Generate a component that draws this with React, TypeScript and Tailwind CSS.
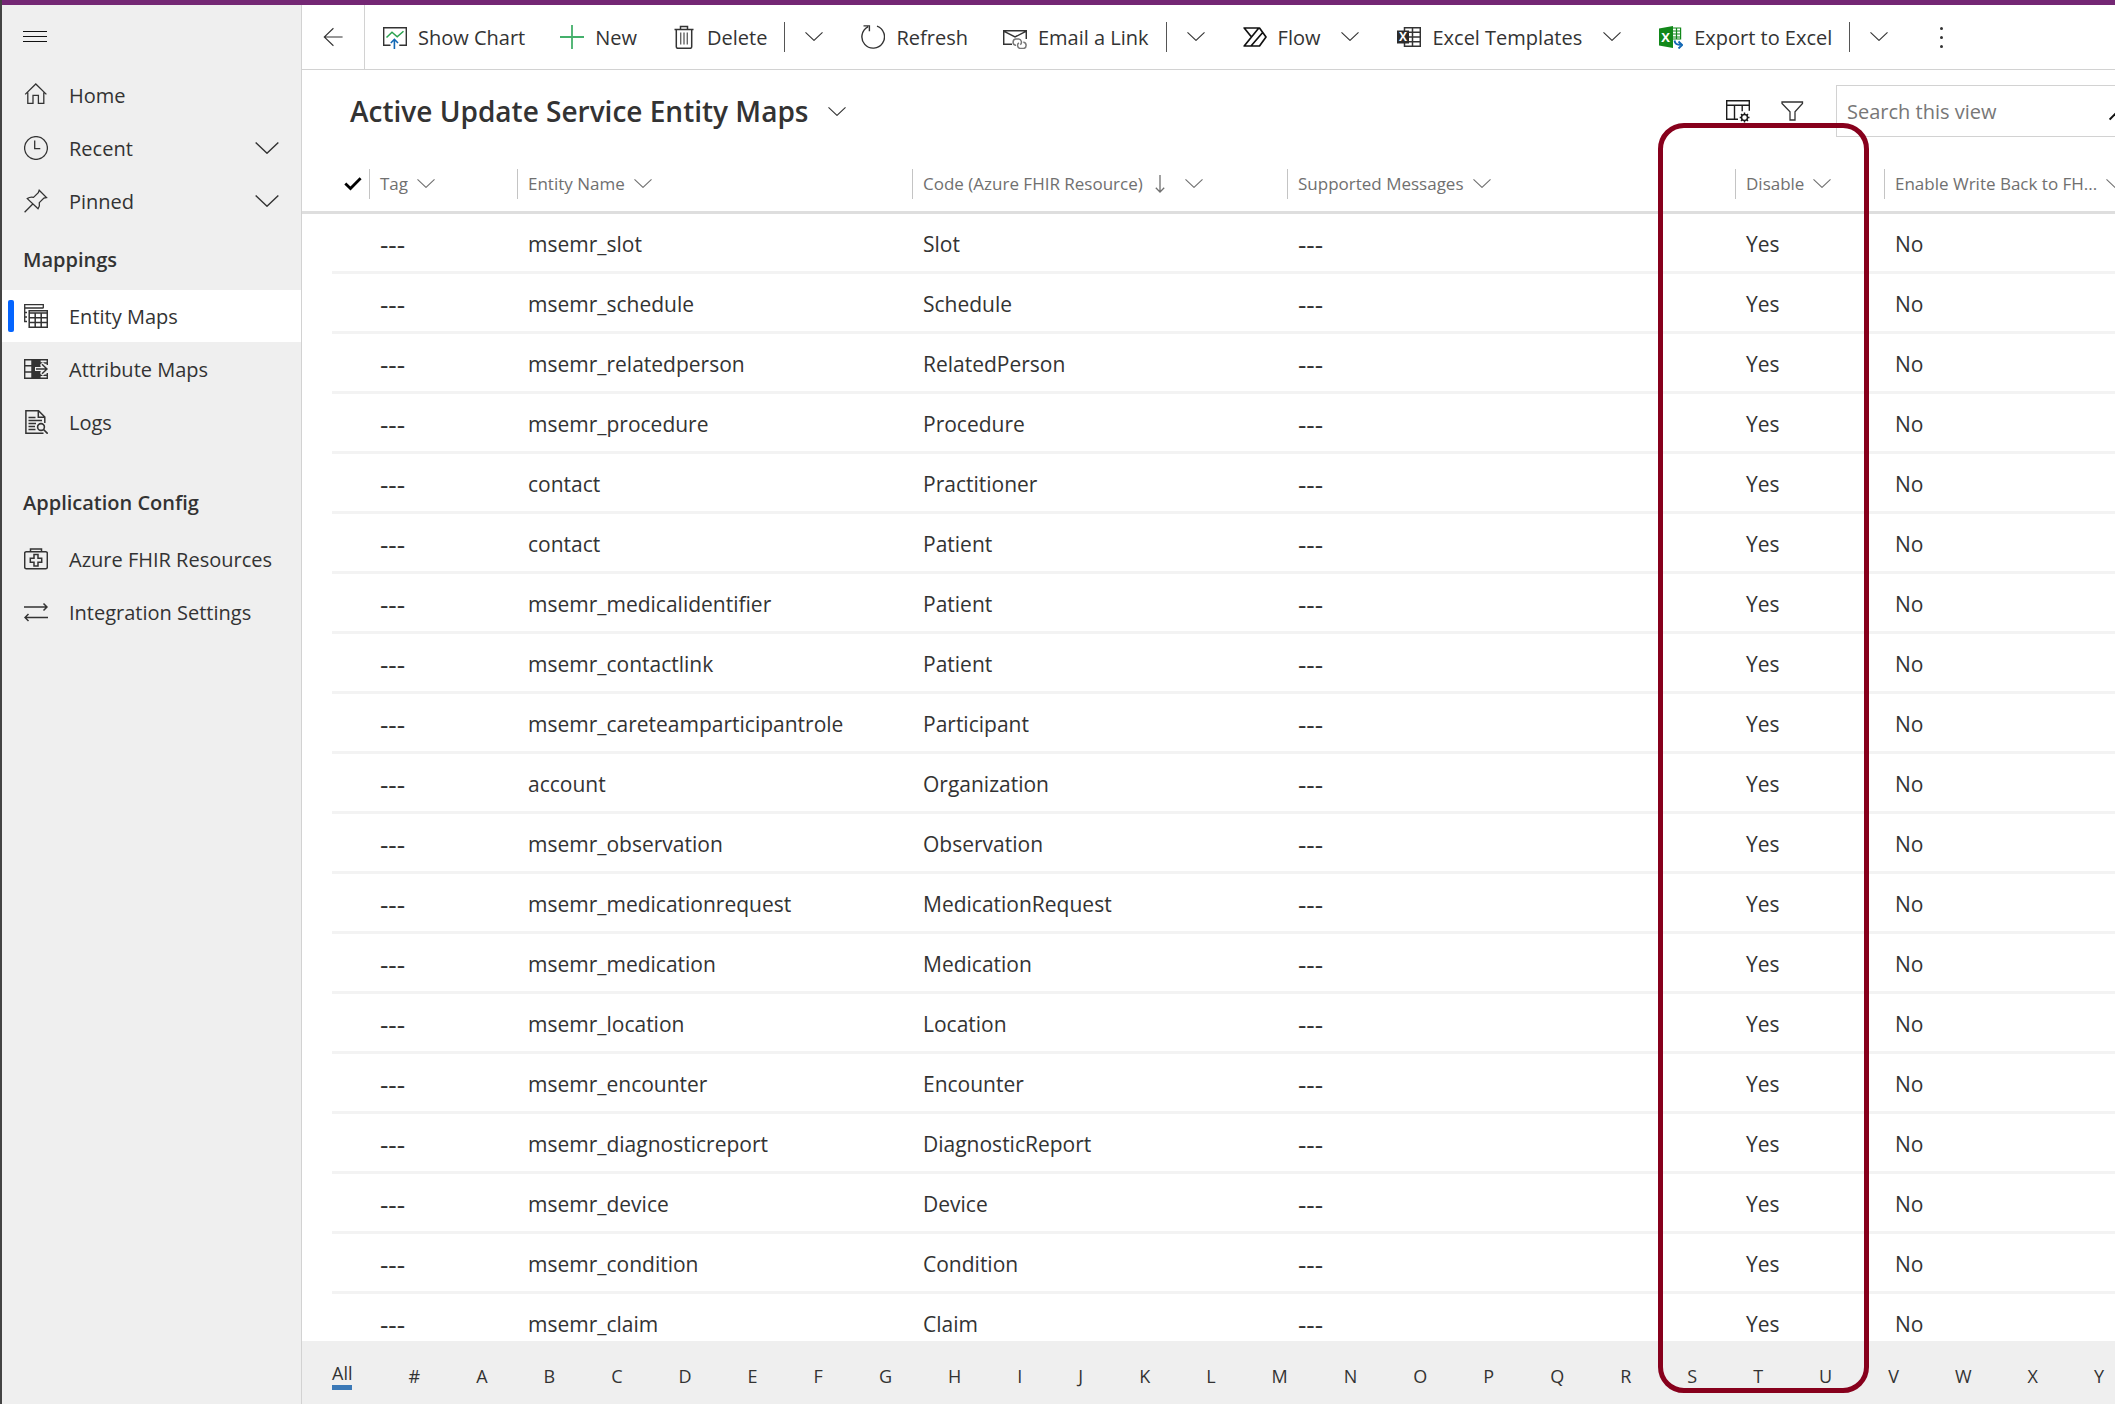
import type { ReactNode } from "react";

type IconProps = { className?: string };

function Svg({ children, className = "size-6" }: { children: ReactNode; className?: string }) {
  return (
    <svg
      viewBox="0 0 24 24"
      className={`${className} shrink-0`}
      fill="none"
      stroke="currentColor"
      strokeWidth={1.3}
      aria-hidden="true"
    >
      {children}
    </svg>
  );
}

function Chevron({ className = "h-[9px] w-[18px]" }: IconProps) {
  return (
    <svg viewBox="0 0 18 9" className={`${className} shrink-0`} fill="none" stroke="currentColor" strokeWidth={1.1} aria-hidden="true">
      <path d="M.5 .4 9 8.4 17.5 .4" />
    </svg>
  );
}

const MenuIcon = () => (
  <Svg>
    <path d="M0 6.5h24M0 11.5h24M0 16.5h24" stroke="#111" strokeWidth={1} />
  </Svg>
);
const HomeIcon = () => (
  <Svg>
    <path d="M1.2 11.4 11.8 1 22.4 11.4M3.8 9.4v10.9h5.2v-8h5.4v8h5.4V9.4" />
  </Svg>
);
const ClockIcon = () => (
  <Svg>
    <circle cx="12" cy="12" r="11.4" />
    <path d="M10.7 4.6v8h5.6" />
  </Svg>
);
const PinIcon = () => (
  <Svg>
    <path d="M.6 23.2 9 14.8M15.2 1.2l7.3 7.3-2.6.5-4.6 4.6c.5 2.4 0 4.4-1.2 6.1L3.3 9.6c1.7-1.2 3.8-1.7 6.2-1.2l4.8-4.7z" />
  </Svg>
);
const EntityIcon = () => (
  <Svg>
    <path d="M3 17.5H.7V.7h18.6v3.6M.7 4h18.6M.7 8.500H3M.7 13H3" />
    <path d="M5.200 6.700h18.100v16.600H5.200zM5.200 9h18.100M5.200 13.700h18.100M5.200 18.500h18.100M11.200 9v14.300M17.200 9v14.300" strokeWidth={1.5} />
  </Svg>
);
const AttributeIcon = () => (
  <Svg>
    <path d="M.7 2.700h22.600v18.600H.7zM.7 8.800h7.800M.7 15h7.800M8.200 2.700v18.600M16 6h7.300M16 18.200h7.300" strokeWidth={1.4} />
    <path d="M8.200 2.700H16v18.600H8.200z" fill="currentColor" />
    <path d="M22.600 8v8" stroke="#efefef" strokeWidth={3} />
    <path d="M11 12h12M17.500 6.500 23 12l-5.500 5.500" stroke="#efefef" strokeWidth={4} />
    <path d="M12 12h11.200M18 7.200 23 12l-5 4.800" strokeWidth={1.5} />
  </Svg>
);
const LogIcon = () => (
  <Svg>
    <path d="M20.800 13V7L14.500.7H1.900v22.600h17.600M14.300.7v6.500h6.500" strokeWidth={1.5} />
    <path d="M4.500 7.500h7M4.500 10.500h13.500M4.500 13.500H12M4.500 16.500h6.500M4.500 19.500h7" strokeWidth={1.4} />
    <circle cx="17" cy="17" r="3.400" strokeWidth={1.6} />
    <path d="m19.500 19.500 4.200 4.200" strokeWidth={1.7} />
  </Svg>
);
const KitIcon = () => (
  <Svg>
    <rect x=".7" y="4.700" width="22.600" height="17" rx="1.500" strokeWidth={1.5} />
    <path d="M6.500 4.700V2h11v2.700" strokeWidth={1.5} />
    <path d="M10 7.500h4v3.700h3.700v4H14V19h-4v-3.800H6.300v-4H10z" strokeWidth={1.5} />
  </Svg>
);
const SwapIcon = () => (
  <Svg>
    <path d="M0 7h23M19.500 3.500 23 7l-3.500 3.500M24 17.500H1M4.500 14 1 17.500 4.500 21" strokeWidth={1.5} />
  </Svg>
);
const BackIcon = () => (
  <Svg className="h-5 w-6">
    <path d="M23.500 12H1.500M12.500 1.500 1.500 12l11 10.500" />
  </Svg>
);
const ChartIcon = () => (
  <Svg>
    <path d="M7.500 20.300H.7V2.700h22.600v17.600h-7" strokeWidth={1.4} />
    <path d="m3.500 12.500 5.500-5.300 5.200 4.600 6.300-5.600" stroke="#2aa24f" strokeWidth={1.5} />
    <path d="M11.400 24V14.500M7.800 18l3.600-3.700L15 18" stroke="#1267b4" strokeWidth={1.6} />
  </Svg>
);
const PlusIcon = () => (
  <Svg>
    <path d="M12 0v24M0 12h24" stroke="#44b06b" strokeWidth={1.8} />
  </Svg>
);
const TrashIcon = () => (
  <Svg>
    <path d="M2.500 4.500h19M8.500 4.500v-3h7v3M4.300 4.500v17.300q0 1.500 1.500 1.500h12.400q1.500 0 1.500-1.500V4.500" strokeWidth={1.5} />
    <path d="M8.700 7.500v12M12 7.500v12M15.300 7.500v12" stroke="#666" strokeWidth={1.4} />
  </Svg>
);
const RefreshIcon = () => (
  <Svg>
    <path d="M16 1.200A11.300 11.300 0 1 1 7 1.800M2.500.9h5.900v5.300" strokeWidth={1.4} />
  </Svg>
);
const MailIcon = () => (
  <Svg>
    <path d="M9 19.300H.7V5.700h22.600V14M.7 6.200 12 12l11.300-5.800" strokeWidth={1.5} />
    <path d="M13 20.300h-.5a3.200 3.200 0 0 1 0-6.200h3.300a3.200 3.200 0 0 1 1.500 5.600M20.300 17.300h.4a3.200 3.200 0 0 1 0 6.200h-3.600a3.200 3.200 0 0 1-1.200-5.700" stroke="#777" strokeWidth={1.5} />
  </Svg>
);
const FlowIcon = () => (
  <Svg>
    <path
      d="M1.200 3h15.300L23 12l-6.500 9H1.200l7.300-9zM8.500 12l7.100-8.700M8.200 20.700 19.700 7.500"
      stroke="#111"
      strokeWidth={1.7}
      strokeLinejoin="round"
    />
  </Svg>
);
const ExcelTemplateIcon = () => (
  <Svg>
    <path d="M7.500 2.700h15.800v18.600H7.500zM7.500 7.200h15.800M7.500 12h15.800M7.500 16.800h15.800M15.500 2.700v18.600" strokeWidth={1.5} />
    <path d="M0 5.500h12v13H0z" fill="#2b2b2b" stroke="none" />
    <text x="6" y="16.200" textAnchor="middle" fontSize="12" fontWeight="700" fill="#fff" stroke="none">X</text>
  </Svg>
);
const ExcelExportIcon = () => (
  <Svg>
    <path d="M13 3h8.600v11H13M13 6h8.600M13 9h8.600M13 12h8.600M17.500 3v11" stroke="#12881a" strokeWidth={1.2} />
    <path d="M0 3.500 14 1v22L0 20.500z" fill="#12881a" stroke="none" />
    <text x="6.700" y="16.500" textAnchor="middle" fontSize="13" fontWeight="700" fill="#fff" stroke="none">X</text>
    <path d="M15.500 15.500c.5 3.500 2 4.500 7 4.500M19.500 16.500l3.700 3.500-3.700 3.500" stroke="#1267b4" strokeWidth={1.9} />
  </Svg>
);
const ColumnsIcon = () => (
  <Svg>
    <path d="M12 20.300H.7V1.700h22.600v10M.7 6.200h22.600M8.500 6.200v14.100M16.200 6.200v6" stroke="#1c1c1c" strokeWidth={1.4} />
    <circle cx="18.500" cy="18.500" r="3" stroke="#1c1c1c" strokeWidth={1.5} />
    <path d="M18.500 13.500v2M18.500 21.500v2M13.700 18.500h1.800M21.500 18.500h2M15 15l1.400 1.400M20.600 20.600 22 22M22 15l-1.400 1.400M16.400 20.600 15 22" stroke="#1c1c1c" strokeWidth={1.4} />
  </Svg>
);
const FilterIcon = () => (
  <Svg>
    <path d="M2 3h20.500v1.500L15 12.700V21h-5v-8.300L2 4.500z" />
  </Svg>
);
const SearchIcon = () => (
  <Svg>
    <path d="m.6 20.500 9-9" stroke="#111" strokeWidth={2} />
    <circle cx="15" cy="7.500" r="6.500" stroke="#111" strokeWidth={1.6} />
  </Svg>
);

function NavItem({ icon, label, expandable, selected }: { icon: ReactNode; label: string; expandable?: boolean; selected?: boolean }) {
  return (
    <li>
      <a
        href="#"
        aria-current={selected ? "page" : undefined}
        className={`relative flex h-[52px] items-center gap-[21px] pr-[22px] pl-[22px] ${selected ? "bg-white" : ""}`}
      >
        {selected && <span className="absolute top-[10px] left-[6px] h-8 w-[6px] rounded-[2px] bg-[#0565ff]" />}
        {icon}
        <span className="flex-1 pt-[2px] whitespace-nowrap">{label}</span>
        {expandable && <Chevron className="h-3 w-6" />}
      </a>
    </li>
  );
}

function Command({ icon, label }: { icon: ReactNode; label: string }) {
  return (
    <button type="button" className="flex h-full items-center gap-[11px] pr-[17px] pl-[18px] whitespace-nowrap">
      {icon}
      <span className="pt-[2px]">{label}</span>
    </button>
  );
}

function SplitChevron({ label, divided }: { label: string; divided?: boolean }) {
  return (
    <>
      {divided && <span className="h-[30px] w-px bg-[#555]" />}
      <button type="button" aria-label={label} className={`flex h-full items-center pr-5 pb-[2px] ${divided ? "pl-5" : "pl-1"}`}>
        <Chevron />
      </button>
    </>
  );
}

const rows: [string, string][] = [
  ["msemr_slot", "Slot"],
  ["msemr_schedule", "Schedule"],
  ["msemr_relatedperson", "RelatedPerson"],
  ["msemr_procedure", "Procedure"],
  ["contact", "Practitioner"],
  ["contact", "Patient"],
  ["msemr_medicalidentifier", "Patient"],
  ["msemr_contactlink", "Patient"],
  ["msemr_careteamparticipantrole", "Participant"],
  ["account", "Organization"],
  ["msemr_observation", "Observation"],
  ["msemr_medicationrequest", "MedicationRequest"],
  ["msemr_medication", "Medication"],
  ["msemr_location", "Location"],
  ["msemr_encounter", "Encounter"],
  ["msemr_diagnosticreport", "DiagnosticReport"],
  ["msemr_device", "Device"],
  ["msemr_condition", "Condition"],
  ["msemr_claim", "Claim"],
];

const columns = ["Tag", "Entity Name", "Code (Azure FHIR Resource)", "Supported Messages", "Disable", "Enable Write Back to FH..."];
const letters = ["#", ..."ABCDEFGHIJKLMNOPQRSTUVWXY"];

function Cell({ children, empty }: { children: ReactNode; empty?: boolean }) {
  return (
    <td className={`border-b-3 border-[#f3f3f3] pt-[2px] pl-[11px] leading-7 ${empty ? "text-[26px]" : ""}`}>{children}</td>
  );
}

export default function App() {
  return (
    <div className="flex h-screen flex-col overflow-hidden border-l-2 border-[#444] bg-white font-['Open_Sans','Noto_Sans',sans-serif] text-[20px] leading-7 text-[#333]">
      <div className="h-[5px] shrink-0 bg-[#742774]" />
      <div className="flex min-h-0 flex-1">
        <nav className="w-[300px] shrink-0 border-r border-[#d2d2d2] bg-[#efefef]" aria-label="Site map">
          <button type="button" aria-label="Toggle navigation" className="flex h-16 items-center pl-[21px]">
            <MenuIcon />
          </button>
          <ul className="flex flex-col gap-px">
            <NavItem icon={<HomeIcon />} label="Home" />
            <NavItem icon={<ClockIcon />} label="Recent" expandable />
            <NavItem icon={<PinIcon />} label="Pinned" expandable />
          </ul>
          <h2 className="flex h-[63px] items-center pt-[2px] pl-[21px] font-semibold">Mappings</h2>
          <ul className="flex flex-col gap-px">
            <NavItem icon={<EntityIcon />} label="Entity Maps" selected />
            <NavItem icon={<AttributeIcon />} label="Attribute Maps" />
            <NavItem icon={<LogIcon />} label="Logs" />
          </ul>
          <h2 className="mt-[22px] flex h-[63px] items-center pt-[2px] pl-[21px] font-semibold">Application Config</h2>
          <ul className="flex flex-col gap-px">
            <NavItem icon={<KitIcon />} label="Azure FHIR Resources" />
            <NavItem icon={<SwapIcon />} label="Integration Settings" />
          </ul>
        </nav>

        <main className="relative flex min-w-0 flex-1 flex-col overflow-hidden">
          <div className="flex h-[65px] shrink-0 items-center border-b border-[#d2d2d2]" role="toolbar" aria-label="Commands">
            <button type="button" aria-label="Back" className="flex h-full w-[63px] items-center justify-center border-r border-[#d2d2d2]">
              <BackIcon />
            </button>
            <Command icon={<ChartIcon />} label="Show Chart" />
            <Command icon={<PlusIcon />} label="New" />
            <Command icon={<TrashIcon />} label="Delete" />
            <SplitChevron label="More delete options" divided />
            <Command icon={<RefreshIcon />} label="Refresh" />
            <Command icon={<MailIcon />} label="Email a Link" />
            <SplitChevron label="More email options" divided />
            <Command icon={<FlowIcon />} label="Flow" />
            <SplitChevron label="Flow options" />
            <Command icon={<ExcelTemplateIcon />} label="Excel Templates" />
            <SplitChevron label="Excel template options" />
            <Command icon={<ExcelExportIcon />} label="Export to Excel" />
            <SplitChevron label="More export options" divided />
            <button type="button" aria-label="More commands" className="flex h-full flex-col items-center justify-center gap-[6px] px-8">
              <span className="size-[3px] rounded-full bg-[#333]" />
              <span className="size-[3px] rounded-full bg-[#333]" />
              <span className="size-[3px] rounded-full bg-[#333]" />
            </button>
          </div>

          <div className="flex h-[82px] shrink-0 items-center pl-12">
            <h1>
              <button type="button" className="flex items-center gap-5 text-[28px] leading-9 font-semibold whitespace-nowrap">
                Active Update Service Entity Maps
                <Chevron />
              </button>
            </h1>
            <div className="ml-auto -mr-5 flex shrink-0 items-center">
              <button type="button" aria-label="Edit columns" className="mr-[30px]">
                <ColumnsIcon />
              </button>
              <button type="button" aria-label="Edit filters" className="mr-8">
                <FilterIcon />
              </button>
              <label className="flex h-[52px] w-[299px] items-center border border-[#d2d2d2] pl-[10px]">
                <input
                  type="text"
                  aria-label="Search this view"
                  placeholder="Search this view"
                  className="w-[262px] shrink-0 bg-transparent pt-[2px] outline-none placeholder:text-[#777]"
                />
                <SearchIcon />
              </label>
            </div>
          </div>

          <div className="min-h-0 flex-1 overflow-hidden">
            <table className="w-full table-fixed border-separate border-spacing-0">
              <colgroup>
                <col className="w-[30px]" />
                <col className="w-[37px]" />
                <col className="w-[148px]" />
                <col className="w-[395px]" />
                <col className="w-[375px]" />
                <col className="w-[448px]" />
                <col className="w-[149px]" />
                <col />
              </colgroup>
              <thead>
                <tr className="h-[62px]">
                  <td className="border-b-3 border-[#dedede]" />
                  <th className="border-b-3 border-[#dedede] pt-1 text-left" scope="col">
                    <button type="button" aria-label="Select all" className="flex pl-3">
                      <svg viewBox="0 0 18 14" className="h-[14px] w-[18px]" fill="none" stroke="#000" strokeWidth={2.8} aria-hidden="true">
                        <path d="m1.300 6.500 5.200 5L16.600 1.300" />
                      </svg>
                    </button>
                  </th>
                  {columns.map((name, i) => (
                    <th key={name} scope="col" className="overflow-hidden border-b-3 border-[#dedede] pt-1 text-left font-normal">
                      <button type="button" className="flex h-[30px] items-center border-l border-[#c4c4c4] pl-[10px] text-[17px] leading-6 whitespace-nowrap text-[#707070]">
                        {name}
                        {i === 2 && (
                          <svg viewBox="0 0 10 18" className="ml-3 h-[18px] w-[10px] shrink-0" fill="none" stroke="currentColor" strokeWidth={1.3} aria-hidden="true">
                            <path d="M5 0v17M.8 12.800 5 17l4.200-4.200" />
                          </svg>
                        )}
                        <Chevron className={i === 2 ? "ml-5 h-[9px] w-[18px]" : "ml-[9px] h-[9px] w-[18px]"} />
                      </button>
                    </th>
                  ))}
                </tr>
              </thead>
              <tbody className="text-[21px]">
                {rows.map(([entity, code]) => (
                  <tr key={entity + code} className="h-[60px]">
                    <td />
                    <td className="border-b-3 border-[#f3f3f3]" />
                    <Cell empty>---</Cell>
                    <Cell>{entity}</Cell>
                    <Cell>{code}</Cell>
                    <Cell empty>---</Cell>
                    <Cell>Yes</Cell>
                    <Cell>No</Cell>
                  </tr>
                ))}
              </tbody>
            </table>
          </div>

          <div className="flex h-[63px] shrink-0 items-center gap-14 overflow-hidden bg-[#efefef] pt-[6px] pl-[30px] text-[18px] leading-6">
            <button type="button" className="shrink-0 border-b-5 border-[#3b79b7]">All</button>
            {letters.map((letter) => (
              <button key={letter} type="button" className="shrink-0">
                {letter}
              </button>
            ))}
          </div>

          <div className="pointer-events-none absolute top-[118px] bottom-[11px] left-[1356px] w-[211px] rounded-[26px] border-5 border-[#87001c]" />
        </main>
      </div>
    </div>
  );
}
